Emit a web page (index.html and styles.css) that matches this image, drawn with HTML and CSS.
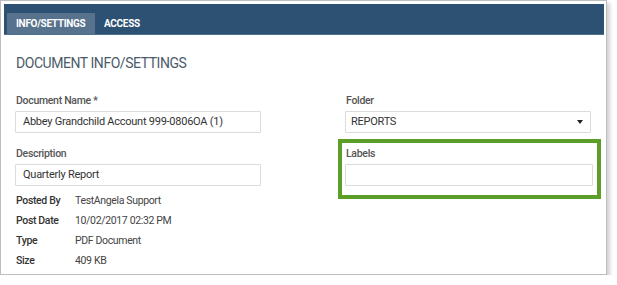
FILE: index.html
```html
<!DOCTYPE html>
<html>
<head>
<meta charset="utf-8">
<link rel="stylesheet" href="styles.css">
</head>
<body>
<div class="frame">
  <div class="tabs">
    <div class="tab active">INFO/SETTINGS</div>
    <div class="tab">ACCESS</div>
  </div>
  <div class="content">
    <h1 class="title">DOCUMENT INFO/SETTINGS</h1>
    <div class="grid">
      <div class="field">
        <div class="label">Document Name *</div>
        <div class="input">Abbey Grandchild Account 999-0806OA (1)</div>
      </div>
      <div class="field">
        <div class="label">Folder</div>
        <div class="input select">REPORTS<svg class="caret" width="6" height="4" viewBox="0 0 6 4"><path d="M0 0H6L3 4Z" fill="#222"/></svg></div>
      </div>
      <div class="field">
        <div class="label">Description</div>
        <div class="input">Quarterly Report</div>
      </div>
      <div class="field highlight">
        <div class="label">Labels</div>
        <div class="input wide"></div>
      </div>
    </div>
    <div class="meta">
      <div class="k">Posted By</div><div class="v">TestAngela Support</div>
      <div class="k">Post Date</div><div class="v">10/02/2017 02:32 PM</div>
      <div class="k">Type</div><div class="v">PDF Document</div>
      <div class="k">Size</div><div class="v">409 KB</div>
    </div>
  </div>
</div>
</body>
</html>
```
FILE: styles.css
```css
html, body {
  margin: 0;
  padding: 0;
  background: #fff;
}
body {
  font-family: Roboto, "Open Sans", sans-serif;
}
.frame {
  width: 605px;
  height: 273px;
  border: 1px solid #bdbdbd;
  box-shadow: 3px 3px 4px rgba(0, 0, 0, 0.18);
  background: #fff;
  overflow: hidden;
}
.tabs {
  margin: 3px 2px 0 3px;
  height: 30px;
  background: #2d5173;
  border-bottom: 1px solid #4d7191;
  display: flex;
  align-items: flex-end;
  padding-left: 3px;
}
.tab {
  height: 21px;
  box-sizing: border-box;
  padding: 0 8px 0 9px;
  font-size: 10px;
  font-weight: 700;
  color: #fff;
  line-height: 21px;
  letter-spacing: -0.3px;
}
.tab.active {
  background: #57728d;
  width: 88px;
}
.content {
  padding: 0 14px;
}
.title {
  margin: 18px 0 0 1px;
  font-size: 14px;
  font-weight: 400;
  color: #4b5b6b;
  line-height: 20px;
  letter-spacing: -0.45px;
}
.grid {
  margin-top: 21px;
  display: grid;
  grid-template-columns: 246px 246px;
  column-gap: 84px;
  row-gap: 14px;
}
.field {
  position: relative;
}
.label {
  font-size: 10.5px;
  font-weight: 500;
  color: #555;
  line-height: 14px;
  height: 17px;
  padding-left: 1px;
  letter-spacing: -0.3px;
}
.input {
  box-sizing: border-box;
  height: 22px;
  border: 1px solid #dcdcdc;
  border-radius: 1px;
  font-size: 11px;
  color: #333;
  line-height: 20px;
  padding: 0 7px;
  letter-spacing: -0.25px;
}
.input.wide {
  width: 248px;
}
.select {
  display: flex;
  align-items: center;
  justify-content: space-between;
  padding: 0 7px 0 5px;
}
.caret {
  display: block;
}
.highlight::after {
  content: "";
  position: absolute;
  left: -7px;
  top: -8px;
  width: 255px;
  height: 52px;
  border: 4px solid #5b9f29;
}
.meta {
  margin-top: 4px;
  display: grid;
  grid-template-columns: 60px auto;
  grid-auto-rows: 20px;
  align-items: center;
  font-size: 10.5px;
  letter-spacing: -0.35px;
}
.k {
  font-weight: 500;
  color: #333;
  padding-left: 1px;
}
.v {
  color: #444;
}
```
